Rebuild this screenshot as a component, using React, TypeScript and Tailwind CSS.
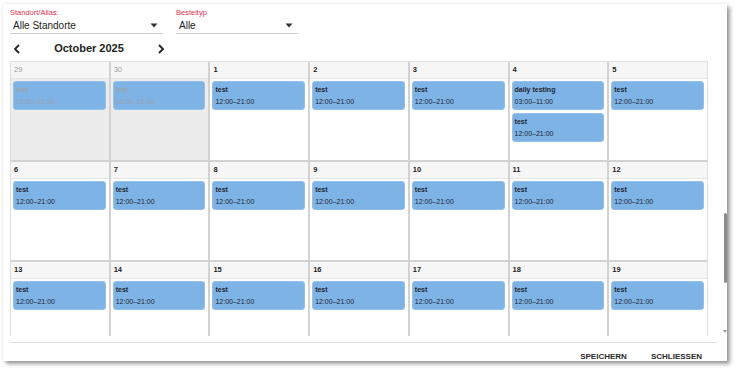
import { useMemo } from "react";

type Ev = { title: string; time: string };
type Day = { num: number; past?: boolean; events: Ev[] };

const test: Ev = { title: "test", time: "12:00\u201321:00" };

// only the weeks that are visible in the scroll area
function buildWeeks(): Day[][] {
  const days: Day[] = [
    { num: 29, past: true, events: [test] },
    { num: 30, past: true, events: [test] },
  ];
  for (let d = 1; d <= 19; d++) {
    if (d === 4) {
      days.push({ num: d, events: [{ title: "daily testing", time: "03:00\u201311:00" }, test] });
    } else {
      days.push({ num: d, events: [test] });
    }
  }
  const weeks: Day[][] = [];
  for (let i = 0; i < days.length; i += 7) weeks.push(days.slice(i, i + 7));
  return weeks;
}

function Caret() {
  return (
    <svg width="8" height="5" viewBox="0 0 8 5" className="shrink-0">
      <path d="M0.5 0.5 L7.5 0.5 L4 4.5 Z" fill="#333" />
    </svg>
  );
}

function Chevron({ dir }: { dir: "left" | "right" }) {
  return (
    <svg width="8" height="10" viewBox="0 0 8 10">
      {dir === "left" ? (
        <path d="M6 1 L2 5 L6 9" fill="none" stroke="#222" strokeWidth="1.8" />
      ) : (
        <path d="M2 1 L6 5 L2 9" fill="none" stroke="#222" strokeWidth="1.8" />
      )}
    </svg>
  );
}

function DayCell({ day, last }: { day: Day; last: boolean }) {
  return (
    <div className={`flex flex-col ${last ? "h-[76px]" : "h-[98px]"} ${day.past ? "bg-[#ececec]" : "bg-white"}`}>
      <div
        className={`h-[17px] shrink-0 flex items-center pl-[3px] border-b border-[#e6e6e6] bg-[#f6f6f6] text-[7.5px] font-bold ${
          day.past ? "text-[#a3a3a3] font-normal" : "text-[#222]"
        }`}
      >
        {day.num}
      </div>
      <div className="flex flex-col gap-[3px] pt-[2px] pl-[2px] pr-[3px]">
        {day.events.map((ev, i) => (
          <div
            key={i}
            className={`h-[29px] rounded-[3px] border border-[#95c0ea] bg-[#7eb3e6] pl-[2px] pt-[2px] text-[7px] leading-[12px] ${
              day.past ? "text-[#9aa4ae]" : "text-[#1e2530]"
            }`}
          >
            <div className="font-bold">{ev.title}</div>
            <div>{ev.time}</div>
          </div>
        ))}
      </div>
    </div>
  );
}

export default function App() {
  const weeks = useMemo(buildWeeks, []);

  return (
    <div className="w-[740px] h-[373px] bg-white overflow-hidden pl-[3px] pt-[4px] font-['Liberation_Sans',Arial,sans-serif]">
      <div className="relative w-[724px] h-[357px] bg-white shadow-[0_0_3px_rgba(0,0,0,0.12),3px_3px_4px_rgba(0,0,0,0.38)] pl-[7px] pt-[3px] flex flex-col">
        {/* filters */}
        <div className="flex gap-[13px] h-[31px] shrink-0">
          <div className="w-[153px] flex flex-col">
            <div className="h-[11px] text-[7.5px] leading-[11px] text-[#e2334f]">Standort/Alias:</div>
            <div className="h-[16px] flex items-center justify-between pl-[3px] pr-[5px] border-b border-[#cfcfcf] text-[10px] text-[#222]">
              <span>Alle Standorte</span>
              <Caret />
            </div>
          </div>
          <div className="w-[122px] flex flex-col">
            <div className="h-[11px] text-[7.5px] leading-[11px] text-[#e2334f]">Besteltyp</div>
            <div className="h-[16px] flex items-center justify-between pl-[3px] pr-[5px] border-b border-[#cfcfcf] text-[10px] text-[#222]">
              <span>Alle</span>
              <Caret />
            </div>
          </div>
        </div>

        {/* month nav */}
        <div className="h-[21px] w-[158px] shrink-0 flex items-center justify-between pl-[3px] pr-[3px]">
          <Chevron dir="left" />
          <span className="text-[11px] font-bold text-[#222]">October 2025</span>
          <Chevron dir="right" />
        </div>

        {/* calendar scroll area */}
        <div className="relative mt-[2px] h-[275px] w-[717px] overflow-hidden shrink-0">
          <div className="w-[698px] border border-b-0 border-[#e0e0e0] bg-[#d2d2d2] grid grid-cols-7 gap-[2px]">
            {weeks.flat().map((day, i) => (
              <DayCell key={i} day={day} last={i >= 14} />
            ))}
          </div>
          <div className="absolute right-[0px] top-[152px] w-[3px] h-[70px] rounded-[2px] bg-[#8c8c8c]" />
          <div className="absolute right-[0px] bottom-[3px] w-0 h-0 border-l-[2px] border-r-[2px] border-t-[3px] border-l-transparent border-r-transparent border-t-[#9a9a9a]" />
        </div>

        {/* footer */}
        <div className="mt-[6px] w-[707px] border-t border-[#e0e0e0]" />
        <div className="flex justify-end gap-[24px] pr-[25px] pt-[9px] text-[8px] font-bold text-[#2a2a2a] leading-[10px]">
          <span>SPEICHERN</span>
          <span>SCHLIESSEN</span>
        </div>
      </div>
    </div>
  );
}
